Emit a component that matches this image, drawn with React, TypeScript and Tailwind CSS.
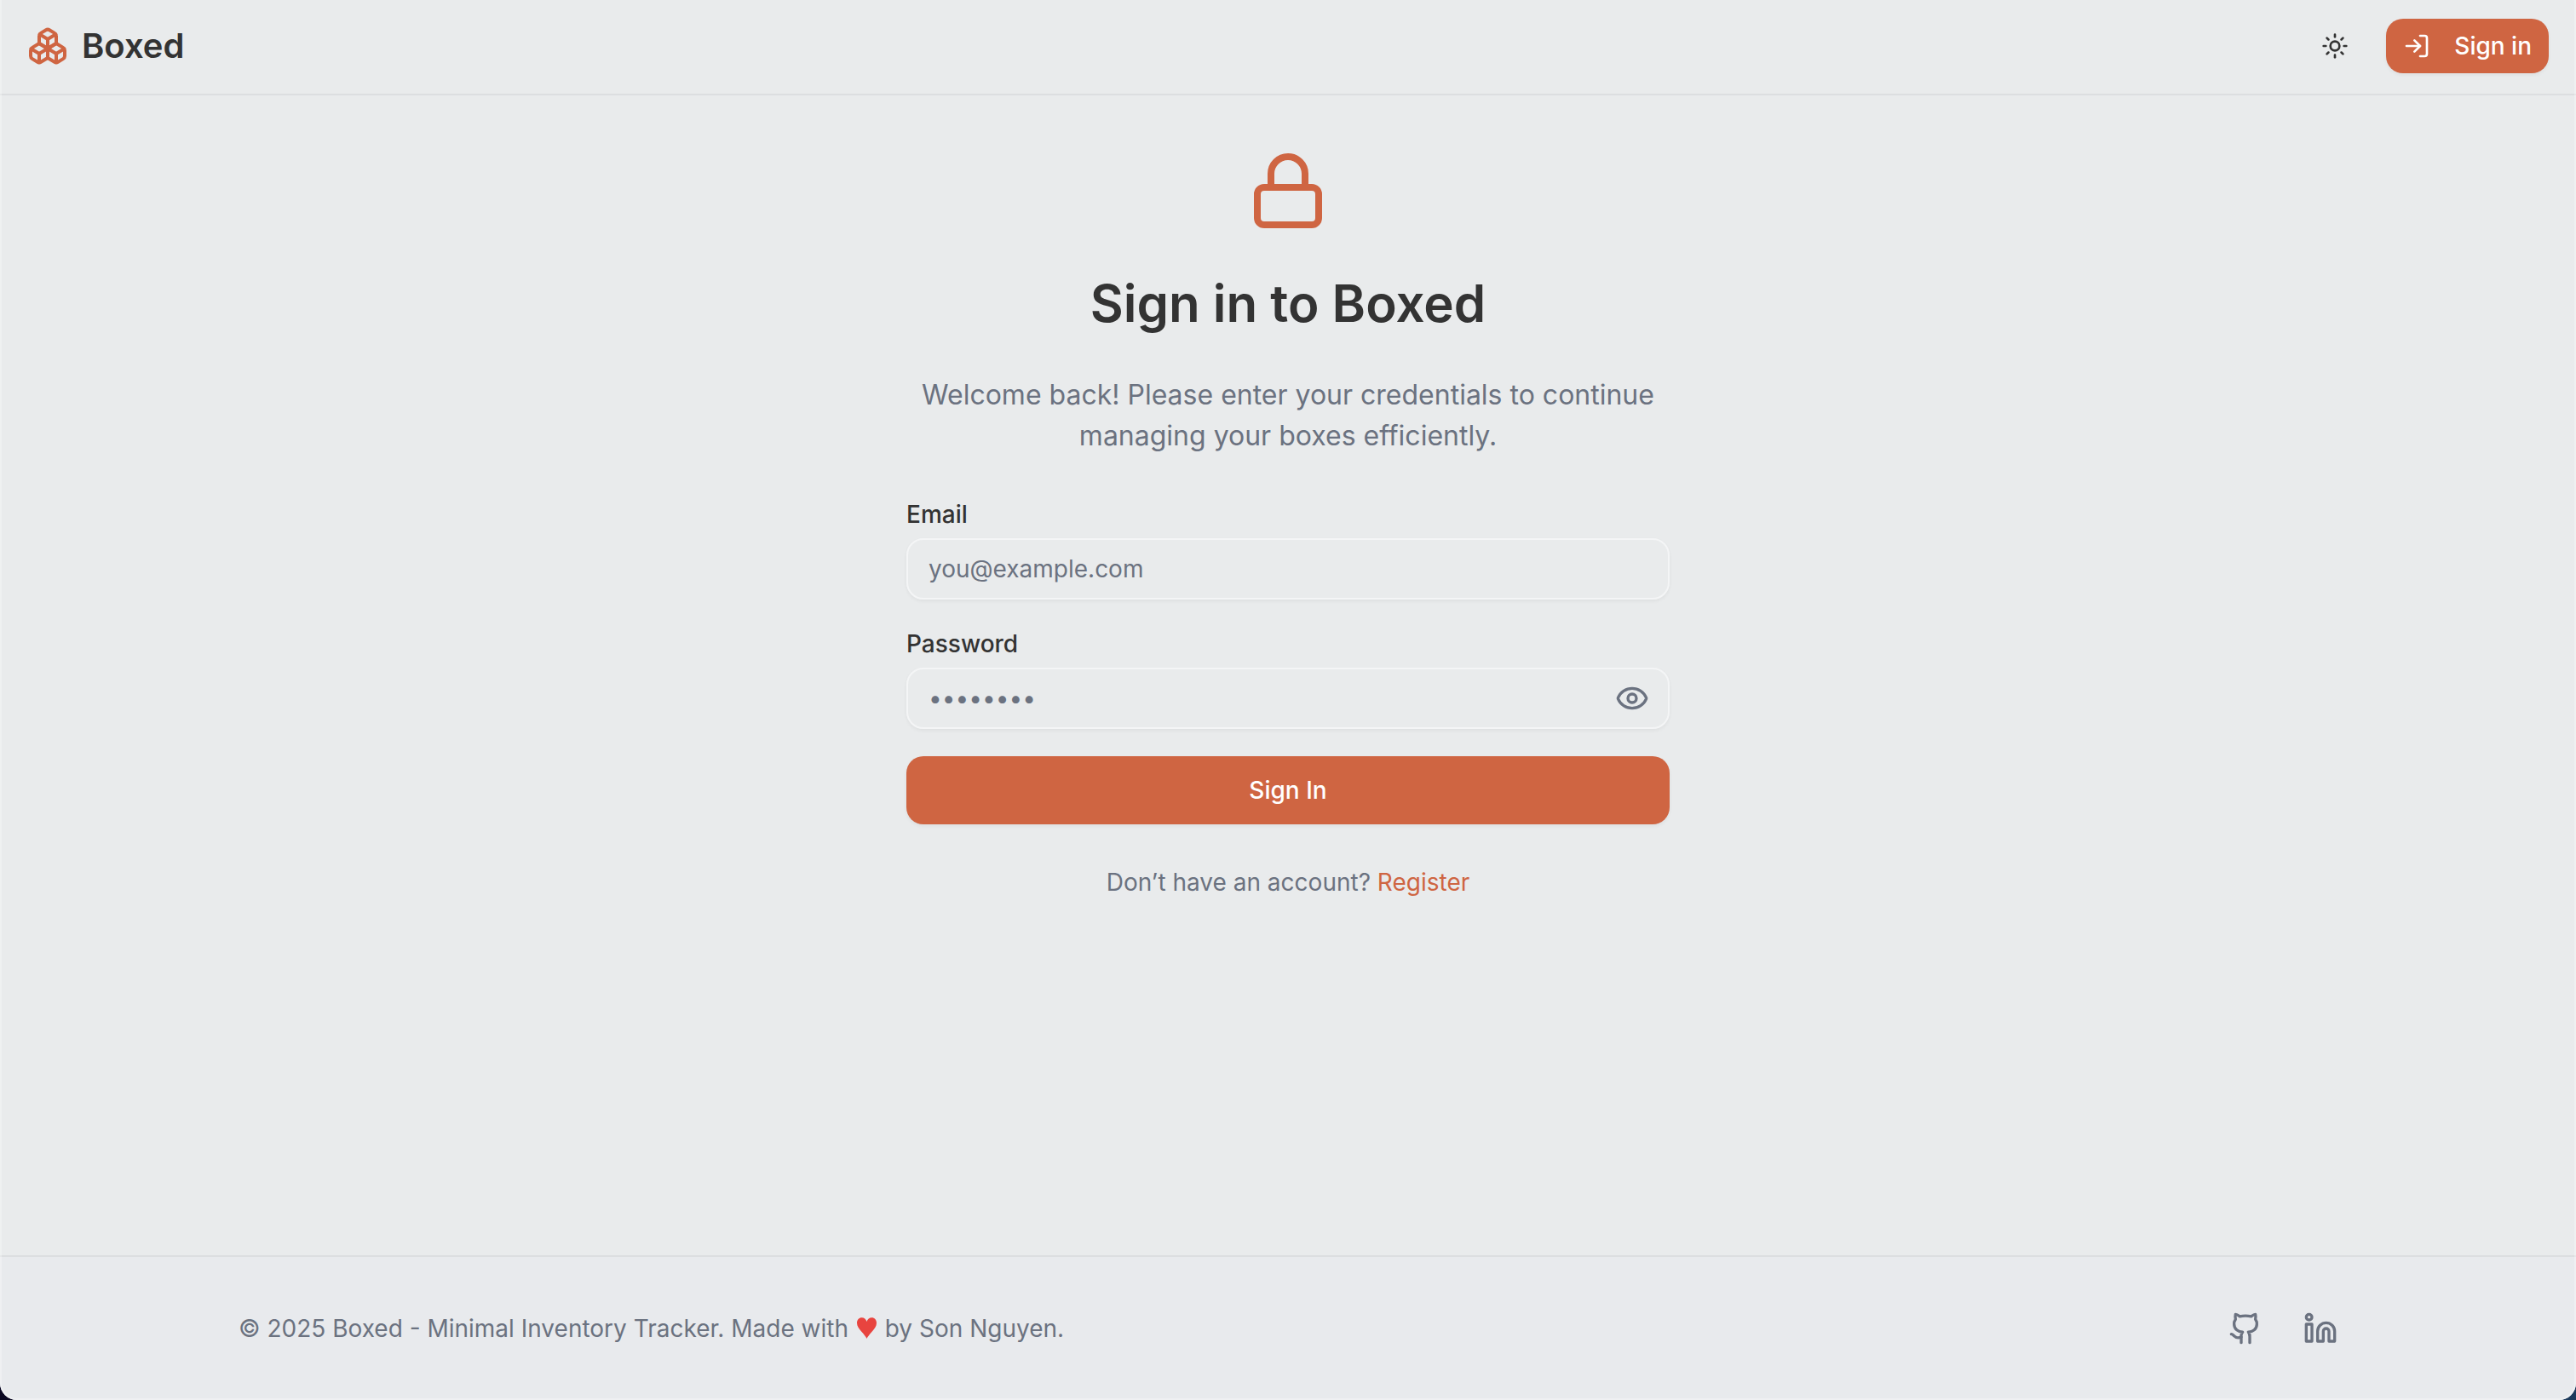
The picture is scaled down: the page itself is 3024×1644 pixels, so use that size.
import { useState } from "react";
import { Boxes, Eye, Github, Linkedin, Lock, LogIn, Sun } from "lucide-react";

const field =
  "h-[72px] w-full rounded-[20px] border-2 border-[#f4f5f6] bg-transparent px-6 text-[28px] leading-10 text-[#333333] shadow-[0_2px_4px_rgba(0,0,0,0.05)] outline-none placeholder:text-[#6b7280]";

function Header() {
  return (
    <header className="border-b-2 border-[#dcdee0]">
      <nav className="flex items-center justify-between px-8 pt-[22px] pb-6">
        <a href="#" className="flex items-center gap-4">
          <Boxes className="size-12 text-[#cf6542]" />
          <span className="text-[40px] leading-[56px] font-semibold">Boxed</span>
        </a>
        <div className="flex items-center gap-7">
          <button type="button" aria-label="Toggle theme" className="flex size-16 items-center justify-center">
            <Sun className="size-8" />
          </button>
          <a
            href="#"
            className="flex h-16 items-center gap-7 rounded-[20px] bg-[#cf6542] px-5 text-[28px] leading-10 font-medium text-white shadow-[0_2px_4px_rgba(0,0,0,0.05)]"
          >
            <LogIn className="size-8" />
            Sign in
          </a>
        </div>
      </nav>
    </header>
  );
}

function SignInForm() {
  const [visible, setVisible] = useState(false);
  return (
    <main className="flex flex-1 flex-col items-center px-8 py-16">
      <div className="flex w-full max-w-[896px] flex-col gap-12">
        <div className="flex flex-col items-center gap-12 text-center">
          <Lock className="size-24 text-[#cf6542]" />
          <h1 className="text-6xl leading-[72px] font-semibold">Sign in to Boxed</h1>
          <p className="text-[32px] leading-[48px] text-[#6b7280]">
            Welcome back! Please enter your credentials to continue managing your boxes efficiently.
          </p>
        </div>
        <form className="flex flex-col gap-8" onSubmit={(e) => e.preventDefault()}>
          <div className="flex flex-col gap-2">
            <label htmlFor="email" className="text-[28px] leading-10 font-medium">
              Email
            </label>
            <input id="email" type="email" placeholder="you@example.com" className={field} />
          </div>
          <div className="flex flex-col gap-2">
            <label htmlFor="password" className="text-[28px] leading-10 font-medium">
              Password
            </label>
            <div className="relative">
              <input
                id="password"
                type={visible ? "text" : "password"}
                placeholder="••••••••"
                className={field}
              />
              <button
                type="button"
                aria-label="Show password"
                onClick={() => setVisible(!visible)}
                className="absolute inset-y-0 right-6 flex items-center text-[#6b7280]"
              >
                <Eye className="size-10" />
              </button>
            </div>
          </div>
          <button
            type="submit"
            className="h-20 rounded-[20px] bg-[#cf6542] text-[28px] leading-10 font-medium text-white shadow-[0_2px_4px_rgba(0,0,0,0.05)]"
          >
            Sign In
          </button>
        </form>
        <p className="text-center text-[28px] leading-10 text-[#6b7280]">
          Don’t have an account?{" "}
          <a href="#" className="text-[#cf6542]">
            Register
          </a>
        </p>
      </div>
    </main>
  );
}

function Heart() {
  return (
    <svg
      viewBox="0 0 27 24"
      role="img"
      aria-label="love"
      className="inline h-6 w-[27px] overflow-visible align-baseline text-[#e8443f]"
    >
      <path
        fill="currentColor"
        d="M13.5 26C12.6 23.6 10.4 21.3 7.6 17.9C4.2 13.8 2 11.2 2 7.4C2 3.8 4.4 1.2 7.7 1.2C10.4 1.2 12.6 3 13.5 6C14.4 3 16.6 1.2 19.3 1.2C22.6 1.2 25 3.8 25 7.4C25 11.2 22.8 13.8 19.4 17.9C16.6 21.3 14.4 23.6 13.5 26Z"
      />
    </svg>
  );
}

function Footer() {
  return (
    <footer className="border-t-2 border-[#dcdee0] bg-[#e8eaed] text-[#6b7280]">
      <div className="mx-auto flex max-w-[2560px] items-center justify-between px-12 py-16">
        <p className="text-[28px] leading-10">
          © 2025 Boxed - Minimal Inventory Tracker. Made with <Heart /> by Son Nguyen.
        </p>
        <div className="flex gap-12">
          <a href="#" aria-label="GitHub">
            <Github className="size-10" />
          </a>
          <a href="#" aria-label="LinkedIn">
            <Linkedin className="size-10" />
          </a>
        </div>
      </div>
    </footer>
  );
}

export default function App() {
  return (
    <div className="bg-linear-to-r from-[#0b0822] to-[#1c3a5c] font-['Inter',sans-serif] text-[#333333]">
      <div className="relative flex min-h-screen flex-col overflow-hidden rounded-b-[20px] bg-[#e9ebec]">
        <Header />
        <SignInForm />
        <Footer />
        <div className="pointer-events-none absolute inset-0 rounded-b-[20px] border-x-2 border-b-2 border-white/30" />
      </div>
    </div>
  );
}
